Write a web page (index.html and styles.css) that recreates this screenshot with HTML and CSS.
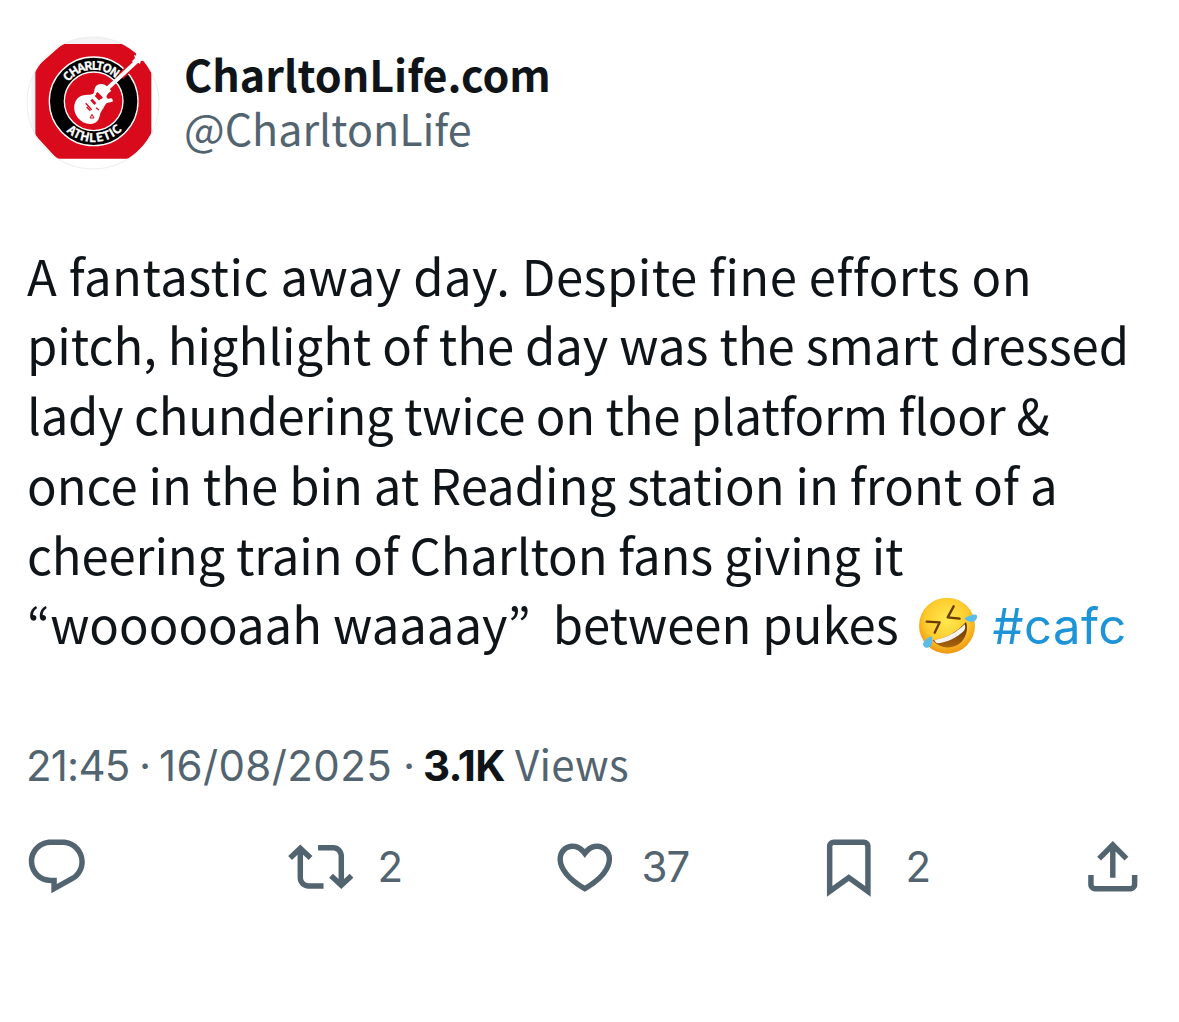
FILE: index.html
```html
<!DOCTYPE html>
<html lang="en">

<head>
    <meta charset="UTF-8">
    <meta name="viewport" content="width=device-width, initial-scale=1.0">
    <title>CharltonLife.com</title>
    <link rel="stylesheet" href="styles.css">
</head>

<body>
    <article class="post">
        <header class="author">
            <svg class="avatar" viewBox="20 20 402 402">
                <defs>
                    <clipPath id="circle"><circle cx="221" cy="221" r="197" /></clipPath>
                    <path id="top-arc" d="M128 216 A95 95 0 0 1 318 216" />
                    <path id="bottom-arc" d="M101 216 A122 122 0 0 0 345 216" />
                </defs>
                <circle cx="221" cy="221" r="198" fill="#fff" />
                <g clip-path="url(#circle)">
                    <path d="M20 20H422V45H20zM20 45H48V388H36V100H20z" fill="#f3f3f3" />
                    <path d="M130 44H325L396 113V325L333 388H113L48 318V116z" fill="#d80a1c" />
                </g>
                <circle cx="221" cy="221" r="198" fill="none" stroke="#e4e4e4" stroke-width="2" />
                <!-- badge ring -->
                <circle cx="223" cy="216" r="133" fill="#000" stroke="#fff" stroke-width="4" />
                <circle cx="223" cy="216" r="88" fill="#d80a1c" stroke="#fff" stroke-width="4" />
                <!-- guitar -->
                <path d="M304 141L346 101" stroke="#d80a1c" stroke-width="22" />
                <path d="M262 180L350 98" stroke="#fff" stroke-width="12" />
                <path d="M338 96L347 86 344 76 350 79 351 69 358 77 363 73 362 82 371 83 367 89 374 93 364 96 362 104 356 100 348 107z" fill="#fff" />
                <path d="M266 174C257 163 244 161 234 167C221 175 229 188 220 194C209 200 190 191 175 207C161 222 161 248 176 266C190 283 212 288 228 280C243 272 239 255 247 244C254 236 257 225 262 221L280 217C282 208 277 204 268 208C259 208 260 200 267 192L276 184z" fill="#fff" />
                <path d="M216 211L228 224M229 197L242 211M232 191L248 207" stroke="#d80a1c" stroke-width="8" />
                <path d="M199 222L217 241M202 233L213 244M230 235L239 242" stroke="#d80a1c" stroke-width="4" />
                <path d="M212 266L218 255 224 266z" fill="none" stroke="#d80a1c" stroke-width="3" />
                <text class="badge-text top"><textPath href="#top-arc" startOffset="47%" text-anchor="middle">CHARLTON</textPath></text>
                <text class="badge-text bottom"><textPath href="#bottom-arc" startOffset="51%" text-anchor="middle">ATHLETIC</textPath></text>
            </svg>
            <div class="names">
                <div class="name">CharltonLife.com</div>
                <div class="handle">@CharltonLife</div>
            </div>
        </header>

        <p class="text">
            <span class="line loose">A fantastic away day. Despite fine efforts on</span>
            <span class="line close">pitch, highlight of the day was the smart dressed</span>
            <span class="line tight">lady chundering twice on the platform floor &amp;</span>
            <span class="line">once in the bin at Reading station in front of a</span>
            <span class="line snug">cheering train of Charlton fans giving it</span>
            <span class="line">“woooooaah waaaay”&nbsp; between pukes <svg class="emoji" viewBox="54 48 180 178">
                    <defs>
                        <radialGradient id="face" cx=".5" cy=".4" r=".6">
                            <stop offset="0" stop-color="#ffe94f" />
                            <stop offset=".65" stop-color="#fdcb2e" />
                            <stop offset="1" stop-color="#ee9413" />
                        </radialGradient>
                        <linearGradient id="mouth" x1="0" y1="0" x2="0" y2="1">
                            <stop offset="0" stop-color="#5b2d05" />
                            <stop offset="1" stop-color="#a9650c" />
                        </linearGradient>
                    </defs>
                    <circle cx="141" cy="137" r="84" fill="url(#face)" />
                    <path d="M80 125L119 127 104 158M161 79L143 112 179 116" fill="none" stroke="#6b3a06" stroke-width="7" stroke-linecap="round" stroke-linejoin="round" />
                    <path d="M98 181C135 177 172 156 198 126C206 148 198 177 177 192C151 209 117 205 98 181z" fill="url(#mouth)" />
                    <path d="M103 180C140 174 170 157 194 133C197 140 196 147 192 152C171 173 142 186 114 190C109 189 105 185 103 180z" fill="#f5f3f0" />
                    <path d="M193 115C206 108 219 102 229 104C235 111 229 123 219 125C208 127 200 122 193 115z" fill="#58bdea" />
                    <path d="M95 169C83 172 70 182 69 194C71 204 83 206 90 200C98 193 97 181 95 169z" fill="#58bdea" />
                </svg> <a class="hashtag">#cafc</a></span>
        </p>

        <div class="meta">
            <span class="time">21:45</span>
            <span class="dot">·</span>
            <span class="date">16/08/2025</span>
            <span class="dot">·</span>
            <b class="views">3.1K</b>
            <span class="label">Views</span>
        </div>

        <footer class="actions">
            <div class="action">
                <svg viewBox="0 0 24 24"><path d="M1.751 10c0-4.42 3.584-8 8.005-8h4.366c4.49 0 8.129 3.64 8.129 8.13 0 2.96-1.607 5.68-4.196 7.11l-8.054 4.46v-3.69h-.067c-4.49.1-8.183-3.51-8.183-8.01zm8.005-6c-3.317 0-6.005 2.69-6.005 6 0 3.37 2.77 6.08 6.138 6.01l.351-.01h1.761v2.3l5.087-2.81c1.951-1.08 3.163-3.13 3.163-5.36 0-3.39-2.744-6.13-6.129-6.13H9.756z" /></svg>
            </div>
            <div class="action">
                <svg viewBox="0 0 24 24"><path d="M4.5 3.88l4.432 4.14-1.364 1.46L5.5 7.55V16c0 1.1.896 2 2 2H13v2H7.5c-2.209 0-4-1.79-4-4V7.55L1.432 9.48.068 8.02 4.5 3.88zM16.5 6H11V4h5.5c2.209 0 4 1.79 4 4v8.45l2.068-1.93 1.364 1.46-4.432 4.14-4.432-4.14 1.364-1.46 2.068 1.93V8c0-1.1-.896-2-2-2z" /></svg>
                <span>2</span>
            </div>
            <div class="action">
                <svg viewBox="0 0 24 24"><path d="M16.697 5.5c-1.222-.06-2.679.51-3.89 2.16l-.805 1.09-.806-1.09C9.984 6.01 8.526 5.44 7.304 5.5c-1.243.07-2.349.78-2.91 1.91-.552 1.12-.633 2.78.479 4.82 1.074 1.97 3.257 4.27 7.129 6.61 3.87-2.34 6.052-4.64 7.126-6.61 1.111-2.04 1.03-3.7.477-4.82-.561-1.13-1.666-1.84-2.908-1.91zm4.187 7.69c-1.351 2.48-4.001 5.12-8.379 7.67l-.503.3-.504-.3c-4.379-2.55-7.029-5.19-8.382-7.67-1.36-2.5-1.41-4.86-.514-6.67.887-1.79 2.647-2.91 4.601-3.01 1.651-.09 3.368.56 4.798 2.01 1.429-1.45 3.146-2.1 4.796-2.01 1.954.1 3.714 1.22 4.601 3.01.896 1.81.846 4.17-.514 6.67z" /></svg>
                <span>37</span>
            </div>
            <div class="action">
                <svg viewBox="0 0 24 24"><path d="M4 4.5C4 3.12 5.119 2 6.5 2h11C18.881 2 20 3.12 20 4.5v18.44l-8-5.71-8 5.71V4.5zM6.5 4c-.276 0-.5.22-.5.5v14.56l6-4.29 6 4.29V4.5c0-.28-.224-.5-.5-.5h-11z" /></svg>
                <span>2</span>
            </div>
            <div class="action">
                <svg viewBox="0 0 24 24"><path d="M12 2.59l5.7 5.7-1.41 1.42L13 6.41V16h-2V6.41l-3.3 3.3-1.41-1.42L12 2.59zM21 15l-.02 3.51c0 1.38-1.12 2.49-2.5 2.49H5.5C4.11 21 3 19.88 3 18.5V15h2v3.5c0 .28.22.5.5.5h12.98c.28 0 .5-.22.5-.5L19 15h2z" /></svg>
            </div>
        </footer>
    </article>
</body>

</html>
```

FILE: styles.css
```css
* {
    margin: 0;
    padding: 0;
    box-sizing: border-box;
}

body {
    background: #fff;
    color: #0f1419;
    font-family: "Noto Sans CJK JP", "Noto Sans", sans-serif;
    font-variant-ligatures: none;
}

.post {
    padding: 36px 0 0 27px;
}

.author {
    display: flex;
    height: 134px;
}

.avatar {
    width: 134px;
    height: 134px;
    flex: none;
    margin-left: -1px;
}

.badge-text {
    font-size: 36px;
    font-weight: bold;
    fill: #fff;
    stroke: #fff;
}

.top {
    font-size: 35px;
    letter-spacing: -3.5px;
}

.bottom {
    letter-spacing: 2px;
}

.names {
    padding: 10px 0 0 24px;
    font-size: 43px;
    line-height: 54px;
}

.name {
    font-weight: bold;
}

.handle {
    color: #536471;
}

.text {
    margin-top: 69.5px;
    font-size: 49px;
    line-height: 69.8px;
}

.line {
    display: block;
    height: 69.8px;
    white-space: nowrap;
}

.loose {
    letter-spacing: 0.47px;
}

.close {
    letter-spacing: -0.03px;
}

.snug {
    letter-spacing: -0.12px;
}

.tight {
    letter-spacing: -0.26px;
}

.emoji {
    width: 60px;
    height: 59.3px;
    margin: 0 4px 0 8px;
    vertical-align: -11px;
}

.hashtag {
    color: #1d93d8;
    font-family: "Inter", sans-serif;
    letter-spacing: 0.5px;
}

.meta {
    display: flex;
    margin-top: 78px;
    height: 60px;
    color: #536471;
    font: 42px/60px "Inter", sans-serif;
}

.time {
    width: 113px;
    margin-left: -1px;
    letter-spacing: -0.8px;
}

.dot {
    width: 20px;
}

.date {
    width: 244px;
    letter-spacing: 0.4px;
}

.views {
    width: 92px;
    color: #0f1419;
    letter-spacing: -0.8px;
}

.label {
    font-family: "Noto Sans CJK JP", sans-serif;
    line-height: 54px;
    letter-spacing: 0.3px;
}

.actions {
    display: grid;
    grid-template-columns: repeat(4, 264px) 66px;
    margin: 38px 0 0 -3px;
}

.action {
    display: flex;
    align-items: center;
    gap: 24px;
    height: 66px;
    color: #536471;
    font: 42px/66px "Inter", sans-serif;
    letter-spacing: -1px;
}

.action svg {
    width: 65.6px;
    height: 65.6px;
    flex: none;
    fill: currentColor;
}
```
